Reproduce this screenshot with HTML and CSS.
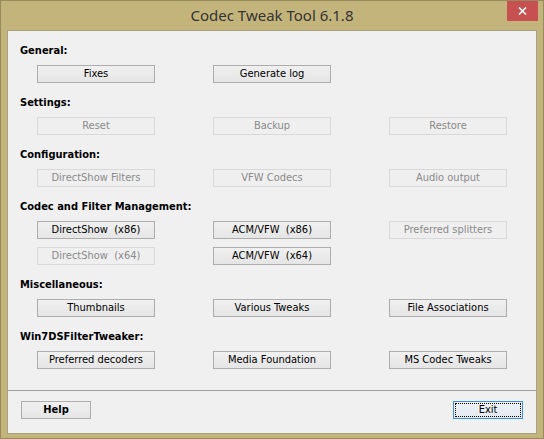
FILE: index.html
```html
<!DOCTYPE html>
<html>
<head>
<meta charset="utf-8">
<link rel="stylesheet" href="styles.css">
</head>
<body>
<div class="window">
  <div class="titlebar">
    <span class="spacer"></span>
    <span class="title">Codec Tweak Tool 6.1.8</span>
    <button class="close" aria-label="Close">
      <svg width="9" height="8" viewBox="0 0 9 8"><path d="M1 0.5 L8 7.5 M8 0.5 L1 7.5" stroke="#fff" stroke-width="1.6"/></svg>
    </button>
  </div>
  <div class="client">
    <div class="main">
      <section class="group">
        <h2 class="label">General:</h2>
        <div class="row">
          <button class="btn">Fixes</button>
          <button class="btn">Generate log</button>
        </div>
      </section>
      <section class="group">
        <h2 class="label">Settings:</h2>
        <div class="row">
          <button class="btn" disabled>Reset</button>
          <button class="btn" disabled>Backup</button>
          <button class="btn" disabled>Restore</button>
        </div>
      </section>
      <section class="group">
        <h2 class="label">Configuration:</h2>
        <div class="row">
          <button class="btn" disabled>DirectShow Filters</button>
          <button class="btn" disabled>VFW Codecs</button>
          <button class="btn" disabled>Audio output</button>
        </div>
      </section>
      <section class="group">
        <h2 class="label">Codec and Filter Management:</h2>
        <div class="row">
          <button class="btn">DirectShow  (x86)</button>
          <button class="btn">ACM/VFW  (x86)</button>
          <button class="btn" disabled>Preferred splitters</button>
          <button class="btn" disabled>DirectShow  (x64)</button>
          <button class="btn">ACM/VFW  (x64)</button>
        </div>
      </section>
      <section class="group">
        <h2 class="label">Miscellaneous:</h2>
        <div class="row">
          <button class="btn">Thumbnails</button>
          <button class="btn">Various Tweaks</button>
          <button class="btn">File Associations</button>
        </div>
      </section>
      <section class="group">
        <h2 class="label">Win7DSFilterTweaker:</h2>
        <div class="row">
          <button class="btn">Preferred decoders</button>
          <button class="btn">Media Foundation</button>
          <button class="btn">MS Codec Tweaks</button>
        </div>
      </section>
    </div>
    <div class="footer">
      <button class="btn small bold">Help</button>
      <button class="btn small focused">Exit</button>
    </div>
  </div>
</div>
</body>
</html>
```
FILE: styles.css
```css
* { box-sizing: border-box; }
html, body { margin: 0; padding: 0; }
body { width: 544px; height: 439px; overflow: hidden; background: #c3b47c; }

.window {
  width: 544px;
  height: 439px;
  border: 1px solid #978b5d;
  background: #c3b47c;
  display: flex;
  flex-direction: column;
}

.titlebar {
  height: 29px;
  display: grid;
  grid-template-columns: 1fr auto 1fr;
  align-items: start;
}
.title {
  font-family: "Noto Sans", "Open Sans", sans-serif;
  font-size: 15px;
  color: #333333;
  line-height: 29px;
  white-space: nowrap;
}
.close {
  justify-self: end;
  margin-right: 5px;
  width: 31px;
  height: 20px;
  border: 0;
  padding: 0;
  background: #c75050;
  display: flex;
  align-items: center;
  justify-content: center;
}

.client {
  margin-left: 6px;
  width: 530px;
  height: 404px;
  border: 1px solid #a9a07f;
  background: #f0f0f0;
  display: flex;
  flex-direction: column;
  font-family: "DejaVu Sans Condensed", "DejaVu Sans", sans-serif;
  font-size: 11px;
}

.main {
  height: 359px;
  padding: 13px 0 0 12px;
  display: flex;
  flex-direction: column;
  gap: 13px;
}

.label {
  margin: 0 0 7px 0;
  font-size: 11px;
  font-weight: bold;
  line-height: 14px;
  color: #000;
}

.row {
  margin-left: 17px;
  display: grid;
  grid-template-columns: 118px 118px 118px;
  column-gap: 58px;
  row-gap: 8px;
}

.btn {
  height: 18px;
  width: 118px;
  padding: 0;
  border: 1px solid #adadad;
  background: linear-gradient(#f0f0f0, #e5e5e5);
  font-family: "DejaVu Sans Condensed", "DejaVu Sans", sans-serif;
  font-size: 11px;
  color: #000;
  white-space: pre;
  line-height: 16px;
  text-align: center;
}
.btn:disabled {
  border-color: #d9d9d9;
  background: #efefef;
  color: #8a8a8a;
}

.footer {
  flex: 1;
  border-top: 1px solid #a0a0a0;
  padding: 10px 13px 0 13px;
  display: flex;
  justify-content: space-between;
  align-items: flex-start;
}
.btn.small { width: 70px; }
.btn.bold { font-weight: bold; }
.btn.focused {
  border-color: #3c8ee3;
  background: linear-gradient(#eef3f8, #e3e9ef);
  outline: 1px dotted #000;
  outline-offset: -3px;
}
```
